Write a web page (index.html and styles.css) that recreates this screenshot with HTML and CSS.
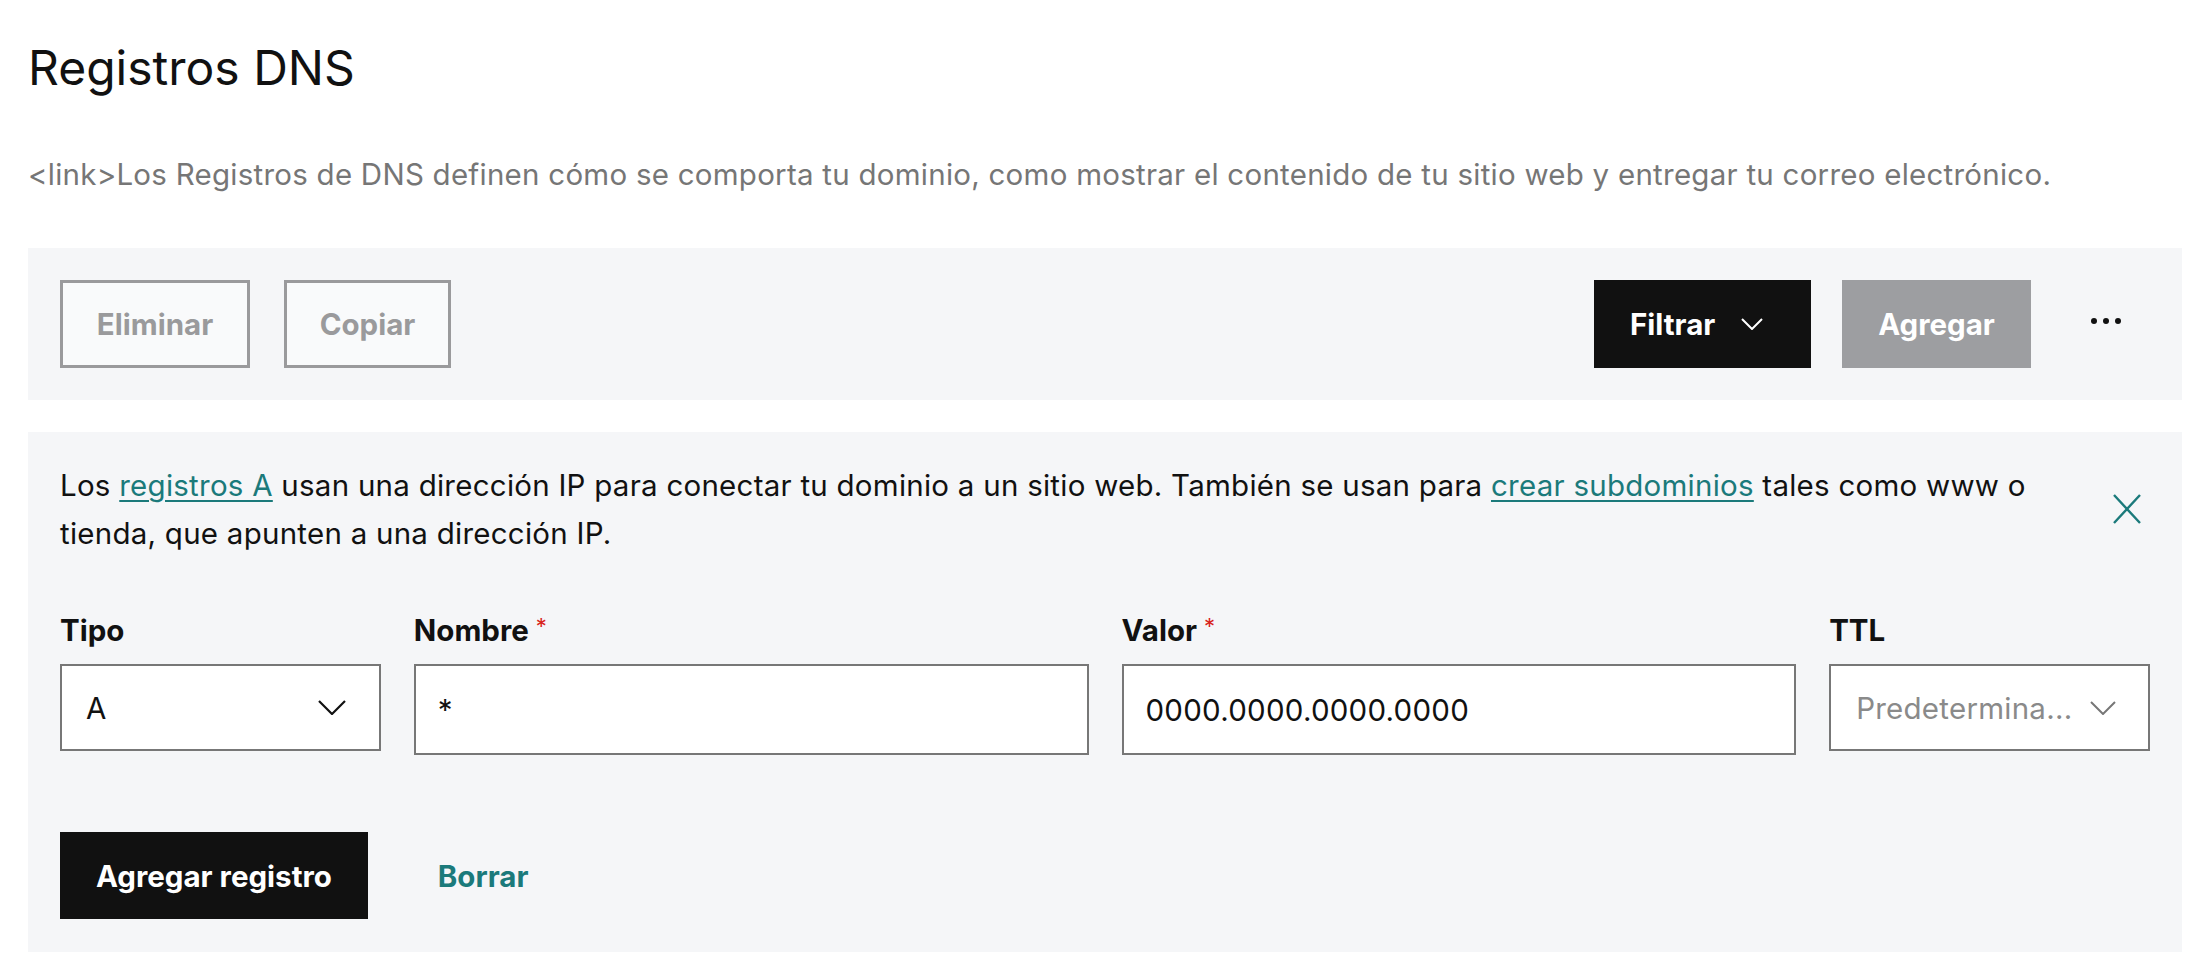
FILE: index.html
```html
<!DOCTYPE html>
<html lang="es">
<head>
<meta charset="utf-8">
<title>Registros DNS</title>
<link rel="stylesheet" href="styles.css">
</head>
<body>
<main class="page">
  <h1 class="title">Registros DNS</h1>
  <p class="desc">&lt;link&gt;Los Registros de DNS definen cómo se comporta tu dominio, como mostrar el contenido de tu sitio web y entregar tu correo electrónico.</p>

  <div class="toolbar">
    <div class="toolbar-left">
      <button class="btn btn-outline">Eliminar</button>
      <button class="btn btn-outline btn-copy">Copiar</button>
    </div>
    <div class="toolbar-right">
      <button class="btn btn-dark btn-filter">Filtrar
        <svg class="chev" width="22" height="12" viewBox="0 0 22 12"><path d="M1 1 L11 11 L21 1" fill="none" stroke="#fff" stroke-width="2"/></svg>
      </button>
      <button class="btn btn-disabled">Agregar</button>
      <button class="btn-more" aria-label="Más">
        <span class="dot"></span><span class="dot"></span><span class="dot"></span>
      </button>
    </div>
  </div>

  <section class="record">
    <div class="alert">
      <p class="alert-text">Los <a href="#" class="link">registros A</a> usan una dirección IP para conectar tu dominio a un sitio web. También se usan para <a href="#" class="link">crear subdominios</a> tales como www o tienda, que apunten a una dirección IP.</p>
      <button class="close" aria-label="Cerrar">
        <svg width="28" height="30" viewBox="0 0 28 30"><path d="M1 1 L27 29 M27 1 L1 29" fill="none" stroke="#1b7a7b" stroke-width="2.4"/></svg>
      </button>
    </div>

    <div class="form">
      <div class="field">
        <label class="label">Tipo</label>
        <div class="select"><span>A</span>
          <svg width="28" height="15" viewBox="0 0 28 15"><path d="M1 1 L14 14 L27 1" fill="none" stroke="#111" stroke-width="2.2"/></svg>
        </div>
      </div>
      <div class="field">
        <label class="label">Nombre <span class="req">*</span></label>
        <input class="input" type="text" value="*">
      </div>
      <div class="field">
        <label class="label">Valor <span class="req">*</span></label>
        <input class="input" type="text" value="0000.0000.0000.0000">
      </div>
      <div class="field">
        <label class="label">TTL</label>
        <div class="select select-ttl"><span class="placeholder">Predetermina...</span>
          <svg width="26" height="14" viewBox="0 0 26 14"><path d="M1 1 L13 13 L25 1" fill="none" stroke="#777" stroke-width="2"/></svg>
        </div>
      </div>
    </div>

    <div class="actions">
      <button class="btn btn-dark btn-add">Agregar registro</button>
      <button class="btn-text">Borrar</button>
    </div>
  </section>
</main>
</body>
</html>
```

FILE: styles.css
```css
* { box-sizing: border-box; }

html, body {
  margin: 0;
  padding: 0;
  background: #ffffff;
}

body {
  font-family: Inter, "Liberation Sans", Arial, sans-serif;
  color: #111111;
}

.page {
  padding: 38px 28px 0 28px;
}

.title {
  margin: 0;
  font-size: 48px;
  line-height: 60px;
  font-weight: 400;
  color: #111111;
}

.desc {
  margin: 56px 0 0 0;
  font-size: 29.5px;
  letter-spacing: 0.25px;
  line-height: 40px;
  color: #767676;
}

.toolbar {
  margin-top: 54px;
  background: #f5f6f8;
  padding: 32px;
  display: flex;
  justify-content: space-between;
  align-items: center;
}

.toolbar-left,
.toolbar-right {
  display: flex;
  align-items: center;
}

.toolbar-left { gap: 34px; }
.toolbar-right { gap: 31px; }

.btn {
  font-family: inherit;
  font-size: 29.5px;
  font-weight: 700;
  height: 88px;
  border: none;
  padding: 0 36px;
  display: inline-flex;
  align-items: center;
  cursor: pointer;
}

.btn-outline {
  background: #f9fafb;
  border: 3px solid #9a9a9c;
  color: #9a9a9c;
  padding: 0;
  width: 190px;
  justify-content: center;
}

.btn-copy { width: 167px; }

.btn-dark {
  background: #111111;
  color: #ffffff;
}

.btn-filter {
  width: 217px;
  padding: 0 0 0 36px;
}

.btn-filter .chev {
  margin-left: 26px;
}

.btn-disabled {
  background: #9d9ea1;
  color: #ffffff;
  width: 189px;
  justify-content: center;
  padding: 0;
}

.btn-more {
  width: 88px;
  height: 88px;
  border: none;
  background: transparent;
  display: flex;
  align-items: center;
  justify-content: center;
  gap: 6px;
  padding: 0 0 6px 0;
}

.dot {
  width: 6px;
  height: 6px;
  border-radius: 50%;
  background: #111111;
}

.record {
  margin-top: 32px;
  background: #f5f6f8;
  padding: 29px 32px 33px 32px;
}

.alert {
  display: flex;
  align-items: center;
}

.alert-text {
  margin: 0;
  flex: 1;
  font-size: 29.5px;
  letter-spacing: 0.25px;
  line-height: 48px;
  color: #111111;
  padding-right: 50px;
}

.link {
  color: #1b7a7b;
  text-decoration: underline;
  text-decoration-thickness: 2px;
  text-underline-offset: 4px;
}

.close {
  border: none;
  background: transparent;
  padding: 0;
  margin-right: 9px;
  display: flex;
}

.form {
  margin-top: 53px;
  display: grid;
  grid-template-columns: 321fr 675fr 675fr 321fr;
  column-gap: 33px;
  align-items: start;
}

.field {
  display: flex;
  flex-direction: column;
}

.label {
  display: block;
  height: 40px;
  font-size: 29.5px;
  line-height: 40px;
  font-weight: 700;
  color: #111111;
  margin-bottom: 14px;
}

.req {
  color: #d8231a;
  font-size: 22px;
  line-height: 1;
  vertical-align: 7px;
  font-weight: 400;
}

.input {
  height: 91px;
  border: 2px solid #777777;
  background: #ffffff;
  font-family: inherit;
  font-size: 29.5px;
  letter-spacing: 0.25px;
  color: #111111;
  padding: 0 22px;
  outline: none;
  width: 100%;
}

.select {
  height: 87px;
  border: 2px solid #777777;
  background: #ffffff;
  display: flex;
  align-items: center;
  justify-content: space-between;
  padding: 0 33px 0 24px;
  font-size: 29.5px;
  letter-spacing: 0.25px;
  color: #111111;
}

.select-ttl {
  padding: 0 32px 0 25px;
}

.placeholder {
  color: #8a8a8a;
}

.actions {
  margin-top: 77px;
  display: flex;
  align-items: center;
}

.btn-add {
  height: 87px;
  padding: 0 36px;
}

.btn-text {
  margin-left: 70px;
  border: none;
  background: transparent;
  padding: 0;
  font-family: inherit;
  font-size: 29.5px;
  font-weight: 700;
  color: #1b7a7b;
  cursor: pointer;
}
```
